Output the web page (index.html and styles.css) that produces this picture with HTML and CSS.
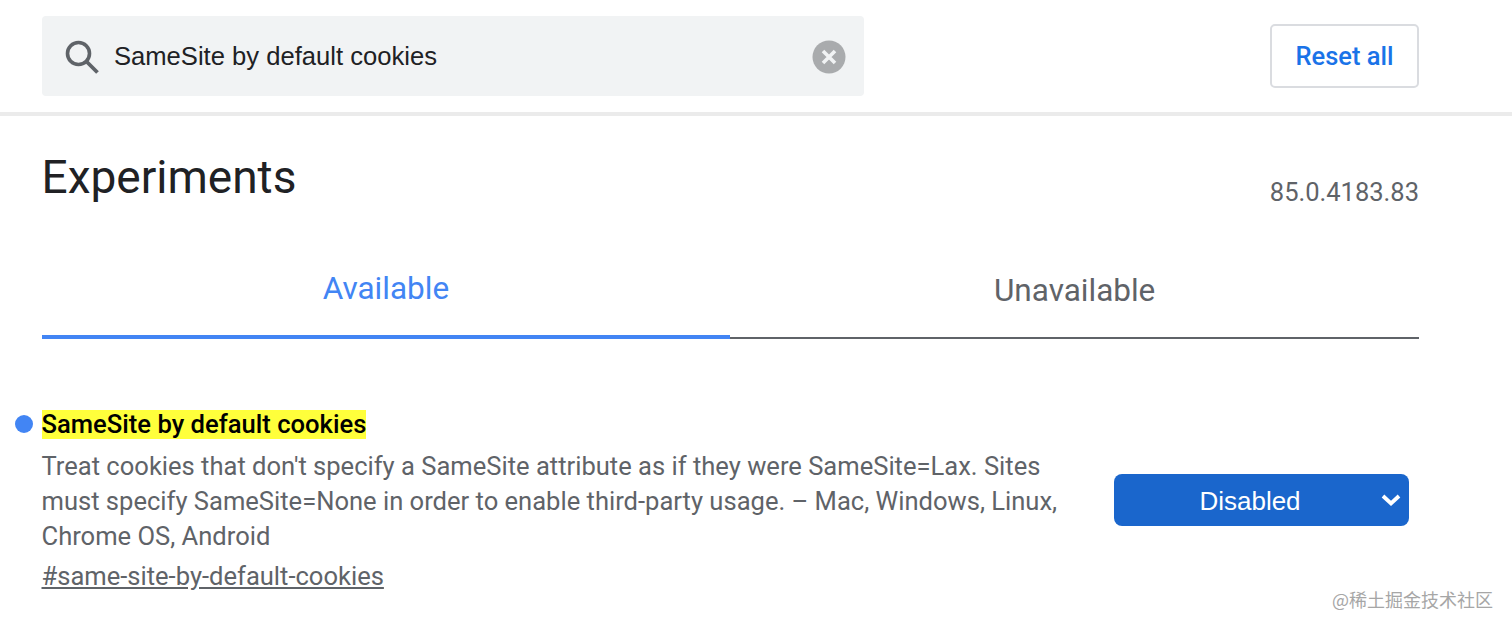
FILE: index.html
```html
<!DOCTYPE html>
<html lang="en">
<head>
<meta charset="utf-8">
<title>Experiments</title>
<link rel="stylesheet" href="styles.css">
</head>
<body>
<header class="top">
  <div class="search">
    <svg class="search-icon" viewBox="0 0 36 36" aria-hidden="true"><circle cx="14.5" cy="14.5" r="11" fill="none" stroke="#5f6368" stroke-width="3.6"/><path d="M22.5 22.5 L33.5 33.5" stroke="#5f6368" stroke-width="3.8" fill="none"/></svg>
    <span class="search-text">SameSite by default cookies</span>
    <svg class="clear-icon" viewBox="0 0 34 34" aria-hidden="true"><circle cx="17" cy="17" r="16.5" fill="#a9abad"/><path d="M11 11 L23 23 M23 11 L11 23" stroke="#f1f3f4" stroke-width="3.6" fill="none"/></svg>
  </div>
  <button class="reset">Reset all</button>
</header>
<main class="content">
  <div class="title-row">
    <h1 class="title">Experiments</h1>
    <span class="version">85.0.4183.83</span>
  </div>
  <div class="tabs">
    <div class="tab tab-active">Available</div>
    <div class="tab tab-plain">Unavailable</div>
  </div>
  <section class="experiment">
    <div class="info">
      <h2 class="name"><mark class="hl">SameSite by default cookies</mark></h2>
      <p class="desc">Treat cookies that don't specify a SameSite attribute as if they were SameSite=Lax. Sites must specify SameSite=None in order to enable third-party usage. – Mac, Windows, Linux, Chrome OS, Android</p>
      <a class="link" href="#same-site-by-default-cookies">#same-site-by-default-cookies</a>
    </div>
    <div class="select">
      <span class="select-text">Disabled</span>
      <svg class="chev" viewBox="0 0 20 14" aria-hidden="true"><path d="M2 3 L10 10.5 L18 3" stroke="#fff" stroke-width="3.8" fill="none"/></svg>
    </div>
  </section>
</main>
<div class="watermark">@稀土掘金技术社区</div>
</body>
</html>
```
FILE: styles.css
```css
html, body { margin: 0; padding: 0; background: #fff; }
body { width: 1512px; height: 630px; overflow: hidden; position: relative; font-family: Roboto, sans-serif; color: #5f6368; }
.top { height: 112px; border-bottom: 4px solid #ebebeb; padding: 0 93px 0 41.5px; display: flex; align-items: center; justify-content: space-between; }
.search { width: 822.5px; height: 80px; background: #f1f3f4; border-radius: 4px; display: flex; align-items: center; padding: 0 18px 0 22px; box-sizing: border-box; }
.search-icon { width: 36px; height: 36px; flex: none; margin-top: 1px; }
.search-text { font-family: "Liberation Sans", sans-serif; font-size: 25.6px; color: #202124; margin-left: 14.5px; flex: 1; }
.clear-icon { width: 34px; height: 34px; flex: none; margin-top: 2px; }
.reset { width: 149px; height: 64px; background: #fff; border: 2px solid #dadce0; border-radius: 5px; color: #1a73e8; font-family: Roboto, sans-serif; font-weight: 500; font-size: 25.5px; padding: 0; }
.content { padding: 0 93px 0 41.5px; }
.title-row { display: flex; justify-content: space-between; align-items: flex-start; height: 117px; }
.title { margin: 31px 0 0; font-size: 46px; line-height: 60px; font-weight: 400; color: #202124; }
.version { margin-top: 60px; font-size: 25.5px; line-height: 32px; }
.tabs { display: flex; height: 106px; }
.tab { flex: 1; box-sizing: border-box; text-align: center; font-size: 31.5px; line-height: 40px; height: 106px; }
.tab-active { color: #4285f4; border-bottom: 4px solid #4285f4; padding-top: 36px; }
.tab-plain { border-bottom: 2px solid #5f6368; padding-top: 38px; }
.experiment { position: relative; display: flex; justify-content: space-between; margin-top: 71px; }
.experiment::before { content: ""; position: absolute; left: -26.5px; top: 5px; width: 18px; height: 18px; border-radius: 50%; background: #4285f4; }
.info { width: 1030px; }
.name { margin: 0; font-size: 25.6px; line-height: 29px; font-weight: 500; color: #000; }
.hl { background: #ffff3b; color: #000; display: inline-block; }
.desc { margin: 9.5px 0 0; font-size: 25.55px; line-height: 35.4px; }
.link { display: block; margin-top: 4px; font-size: 25.55px; line-height: 35px; color: #5f6368; text-decoration: underline; }
.select { width: 295px; height: 52px; margin: 64px 10px 0 0; background: #1a66cc; border-radius: 8px; color: #fff; position: relative; display: flex; align-items: center; justify-content: center; box-sizing: border-box; padding: 2px 23px 0 0; }
.select-text { font-family: "Liberation Sans", sans-serif; font-size: 26px; }
.chev { position: absolute; right: 8px; top: 19px; width: 20px; height: 14px; }
.watermark { position: absolute; left: 1332px; top: 588px; font-family: "Noto Sans CJK SC", sans-serif; font-size: 18px; line-height: 22px; color: #a6a6a6; white-space: nowrap; }
```
